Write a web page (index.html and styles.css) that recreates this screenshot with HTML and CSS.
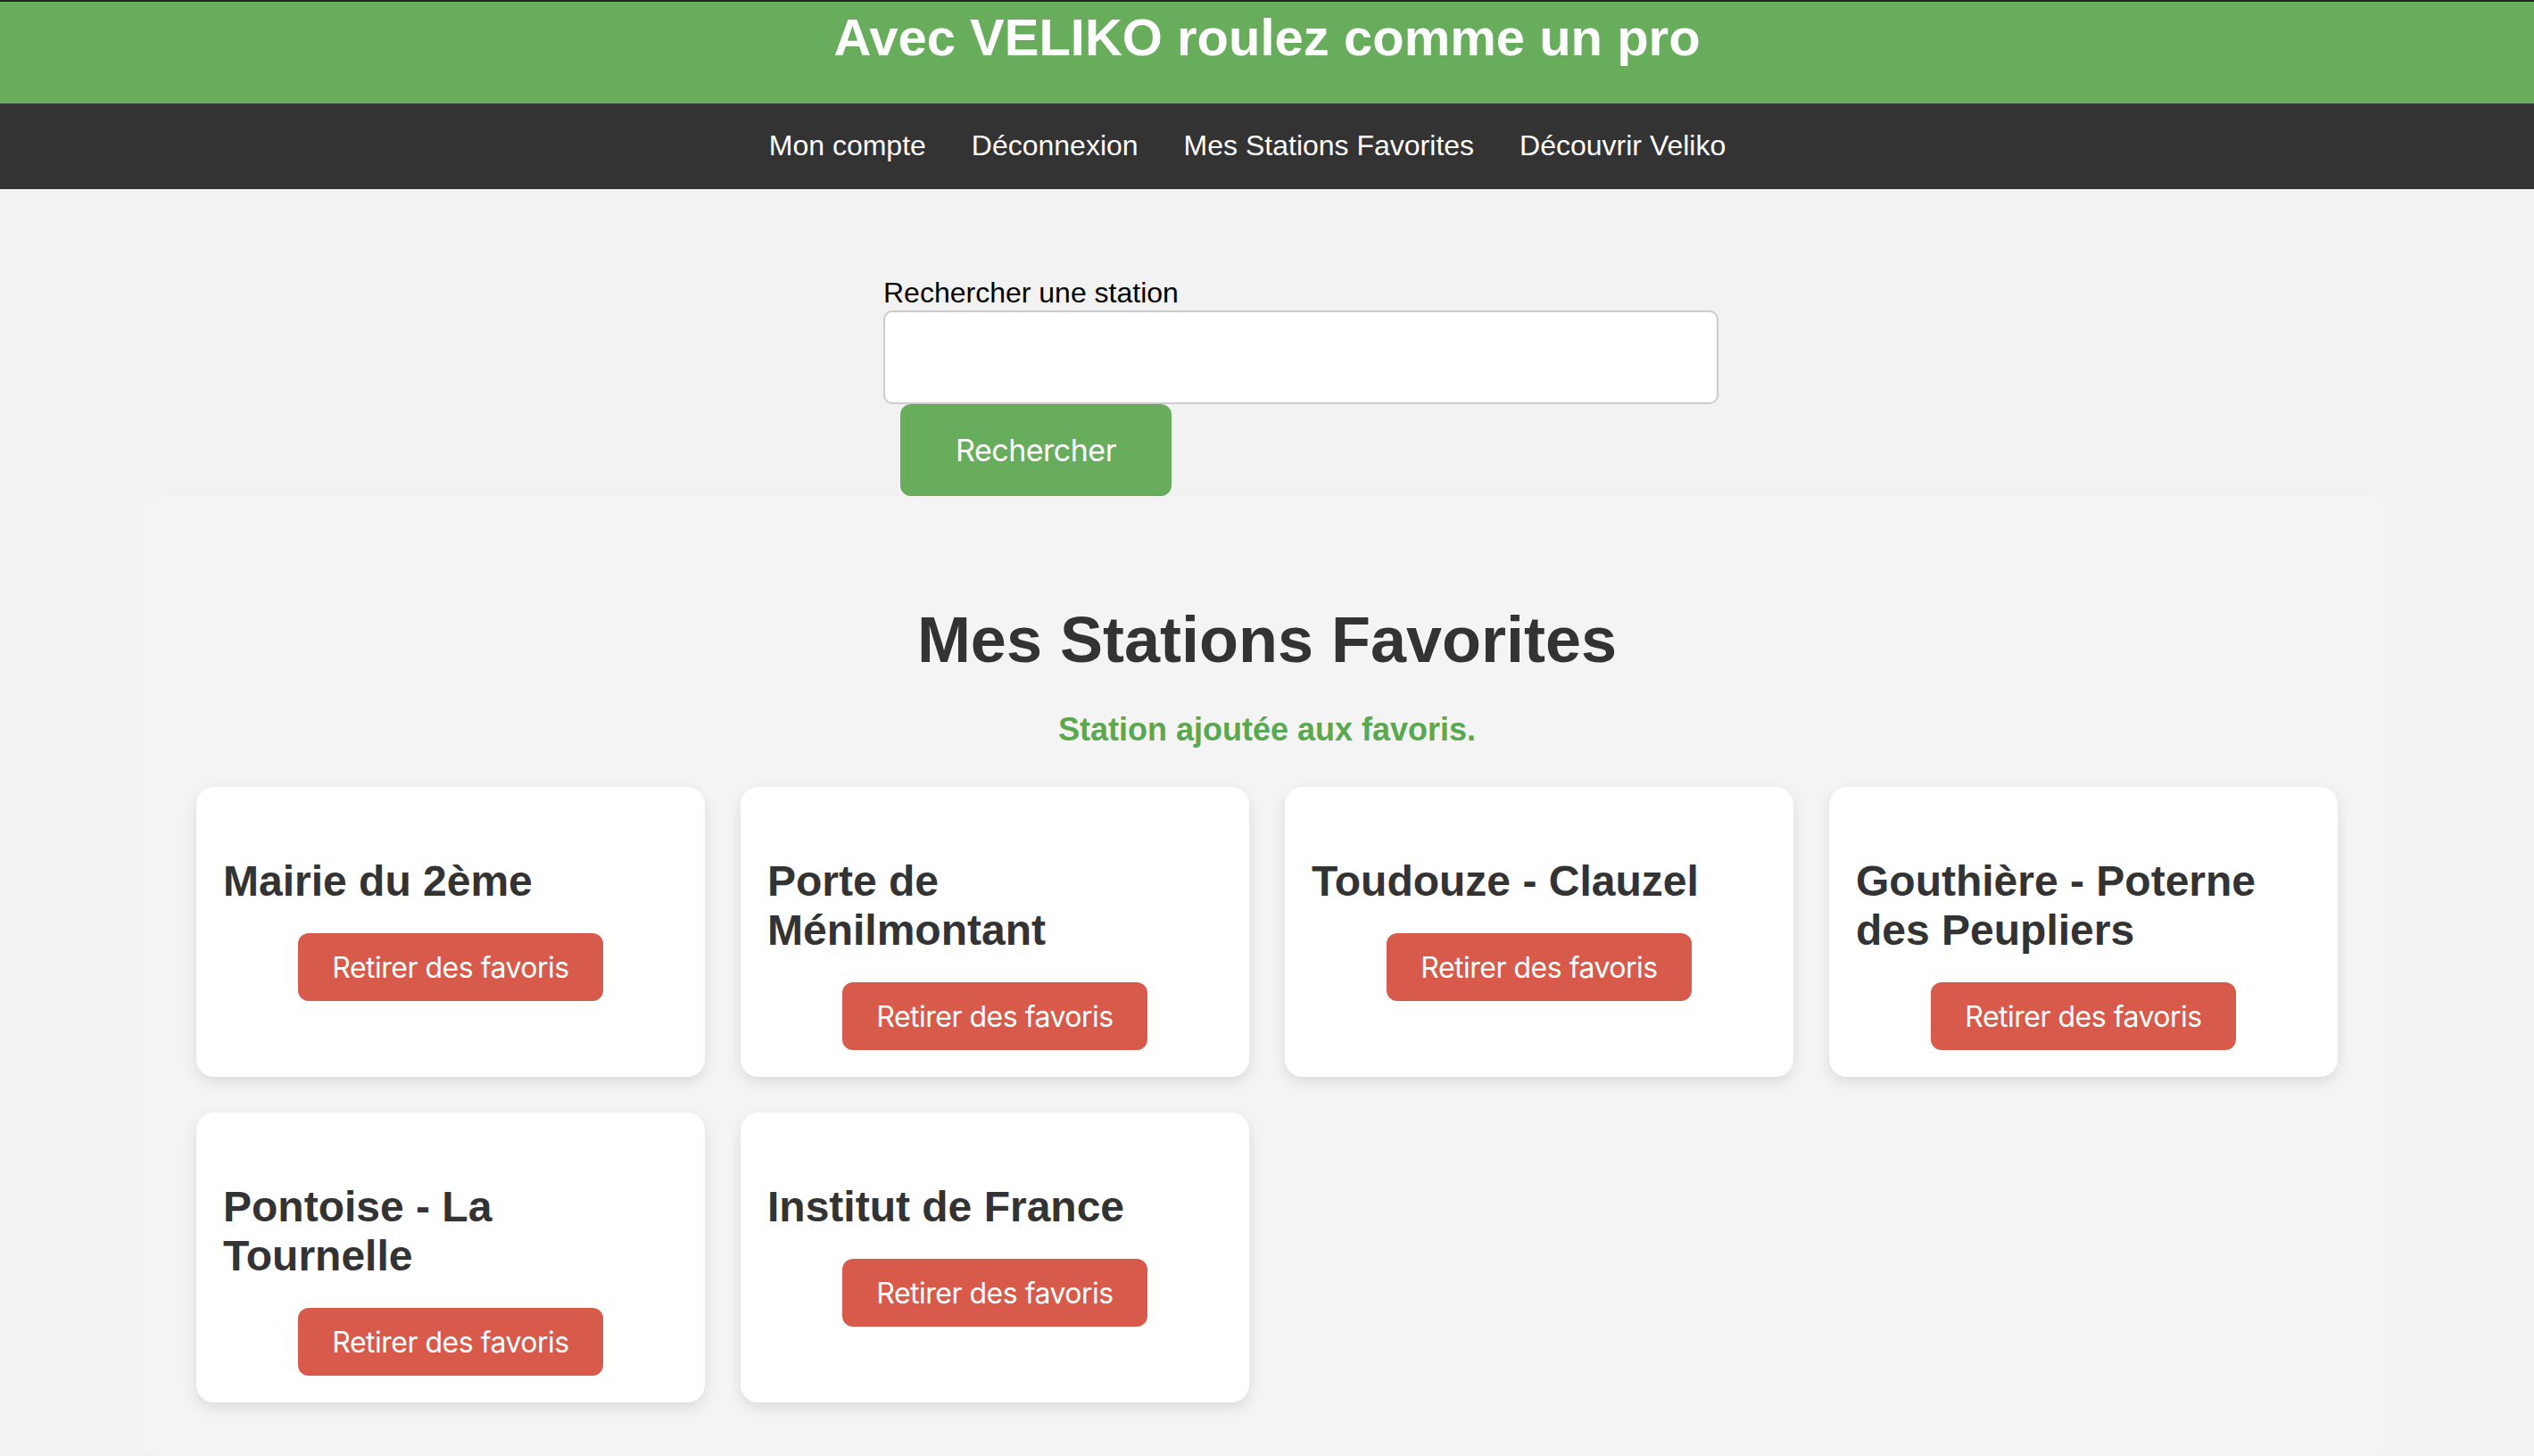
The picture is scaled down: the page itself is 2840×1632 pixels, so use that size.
FILE: index.html
```html
<!DOCTYPE html>
<html lang="fr">
<head>
<meta charset="utf-8">
<title>Veliko - Mes Stations Favorites</title>
<link rel="stylesheet" href="styles.css">
</head>
<body>
<header class="top">
  <h1 class="top-title">Avec VELIKO roulez comme un pro</h1>
</header>
<nav class="menu">
  <ul class="menu-list">
    <li><a href="#" class="menu-link">Mon compte</a></li>
    <li><a href="#" class="menu-link">Déconnexion</a></li>
    <li><a href="#" class="menu-link">Mes Stations Favorites</a></li>
    <li><a href="#" class="menu-link">Découvrir Veliko</a></li>
  </ul>
</nav>
<form class="search">
  <label class="search-label" for="q">Rechercher une station</label>
  <input class="search-input" id="q" type="text">
  <button class="search-btn" type="button">Rechercher</button>
</form>
<main class="favs">
  <h2 class="favs-title">Mes Stations Favorites</h2>
  <p class="favs-msg">Station ajoutée aux favoris.</p>
  <div class="grid">
    <div class="card"><h3 class="card-title">Mairie du 2ème</h3><button class="remove-btn" type="button">Retirer des favoris</button></div>
    <div class="card"><h3 class="card-title">Porte de Ménilmontant</h3><button class="remove-btn" type="button">Retirer des favoris</button></div>
    <div class="card"><h3 class="card-title">Toudouze - Clauzel</h3><button class="remove-btn" type="button">Retirer des favoris</button></div>
    <div class="card"><h3 class="card-title">Gouthière - Poterne des Peupliers</h3><button class="remove-btn" type="button">Retirer des favoris</button></div>
    <div class="card"><h3 class="card-title">Pontoise - La Tournelle</h3><button class="remove-btn" type="button">Retirer des favoris</button></div>
    <div class="card"><h3 class="card-title">Institut de France</h3><button class="remove-btn" type="button">Retirer des favoris</button></div>
  </div>
</main>
</body>
</html>
```
FILE: styles.css
```css
* { box-sizing: border-box; }
html, body { margin: 0; padding: 0; }
body {
  background: #f2f2f2;
  font-family: "Liberation Sans", Arial, Helvetica, sans-serif;
  color: #000;
}
.top {
  background: #67ad5b;
  border-top: 2px solid #222;
  padding: 6px 0 41px;
}
.top-title {
  margin: 0;
  text-align: center;
  color: #fff;
  font-size: 58px;
  line-height: 67px;
  font-weight: bold;
}
.menu {
  background: #333;
  padding: 29px 44px 30px 0;
}
.menu-list {
  list-style: none;
  margin: 0;
  padding: 0;
  display: flex;
  justify-content: center;
  gap: 51px;
}
.menu-link {
  color: #fff;
  text-decoration: none;
  font-size: 32px;
  line-height: 37px;
}
.search {
  width: 1018px;
  margin: 0 auto;
  padding: 98px 0 0 79px;
}
.search-label {
  display: block;
  font-size: 32px;
  line-height: 37px;
  margin-bottom: 1px;
  color: #000;
}
.search-input {
  display: block;
  width: 936px;
  height: 105px;
  border: 2px solid #ccc;
  border-radius: 10px;
  background: #fff;
  font-size: 32px;
  padding: 0 20px;
}
.search-btn {
  display: block;
  margin-left: 19px;
  width: 304px;
  height: 103px;
  border: none;
  border-radius: 12px;
  background: #67ad5b;
  color: #fff;
  font-family: Inter, "Liberation Sans", sans-serif;
  font-size: 34px;
  letter-spacing: -0.5px;
}
.favs {
  width: 2520px;
  margin: 0 auto;
  background: #f4f4f4;
  border-radius: 20px;
  padding: 120px 60px 60px;
}
.favs-title {
  margin: 0;
  text-align: center;
  color: #333;
  font-size: 72px;
  line-height: 83px;
  font-weight: bold;
}
.favs-msg {
  margin: 38px 0 43px;
  text-align: center;
  color: #5aa851;
  font-weight: bold;
  font-size: 36px;
  line-height: 42px;
}
.grid {
  display: grid;
  grid-template-columns: repeat(4, 570px);
  gap: 40px;
}
.card {
  background: #fff;
  border-radius: 20px;
  box-shadow: 0 6px 16px rgba(0, 0, 0, 0.1);
  padding: 30px;
}
.card-title {
  margin: 48px 0 31px;
  color: #333;
  font-size: 48px;
  line-height: 55px;
  font-weight: bold;
}
.remove-btn {
  display: block;
  margin: 0 auto;
  width: 342px;
  height: 76px;
  border: none;
  border-radius: 12px;
  background: #d75a4a;
  color: #fff;
  font-family: Inter, "Liberation Sans", sans-serif;
  font-size: 32px;
  letter-spacing: -0.5px;
}
```
